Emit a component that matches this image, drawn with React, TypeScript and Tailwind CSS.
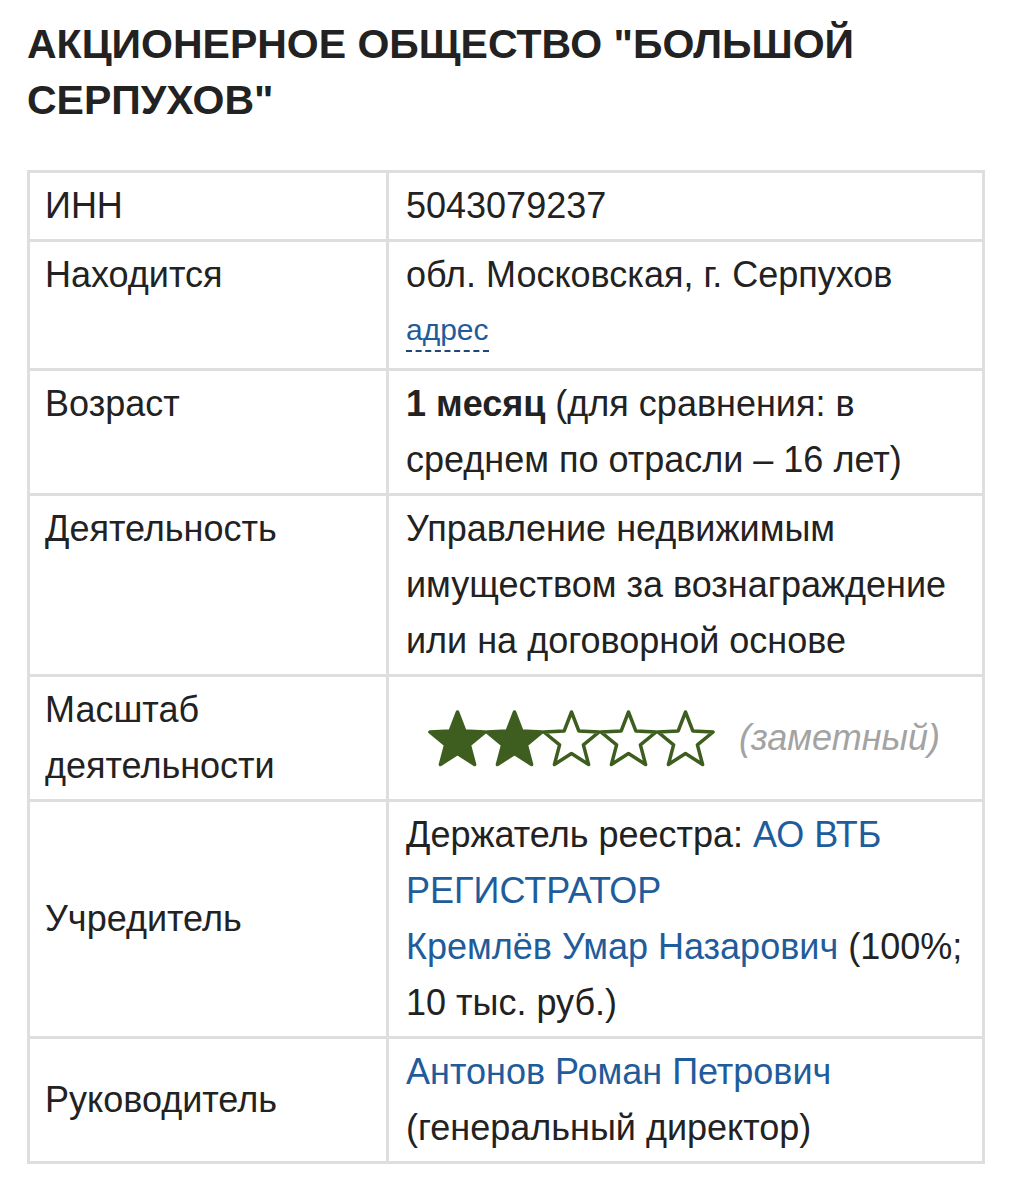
import type { ReactNode } from "react";

const STAR =
  "M28.5 2 L35.8 20.9 L56.1 22 L40.4 34.9 L45.6 54.5 L28.5 43.5 L11.4 54.5 L16.6 34.9 L0.9 22 L21.2 20.9 Z";

function Stars({ filled }: { filled: number }) {
  return (
    <svg width="285" height="57" viewBox="0 0 285 57" className="block overflow-visible">
      {[0, 1, 2, 3, 4].map((i) => (
        <path
          key={i}
          d={STAR}
          transform={`translate(${i * 57} 0)`}
          fill={i < filled ? "#3e5e1f" : "#ffffff"}
          stroke="#3e5e1f"
          strokeWidth="3.5"
          strokeLinejoin="round"
        />
      ))}
    </svg>
  );
}

function Link({ children }: { children: ReactNode }) {
  return <span className="text-[#1f5c9b]">{children}</span>;
}

function Row({
  label,
  children,
  middle,
}: {
  label: ReactNode;
  children: ReactNode;
  middle?: boolean;
}) {
  return (
    <tr>
      <td
        className={`w-[359px] border-[3px] border-[#dedede] py-[5px] pl-[15px] pr-3 ${
          middle ? "align-middle" : "align-top"
        }`}
      >
        {label}
      </td>
      <td className="border-[3px] border-[#dedede] py-[5px] pl-[17px] pr-3 align-top">
        {children}
      </td>
    </tr>
  );
}

export default function App() {
  return (
    <div className="min-h-[1200px] bg-white font-['Liberation_Sans',Arial,sans-serif] text-[#222]">
      <div className="px-[27px] pt-[16px]">
        <h1 className="mb-[42px] text-[41px] font-bold leading-[56px] text-[#222]">
          АКЦИОНЕРНОЕ ОБЩЕСТВО "БОЛЬШОЙ СЕРПУХОВ"
        </h1>
        <table className="w-[958px] border-collapse text-[36px] leading-[56px]">
          <tbody>
            <Row label="ИНН">5043079237</Row>
            <Row label="Находится">
              <div>обл. Московская, г. Серпухов</div>
              <div className="pb-[8px] leading-[50px]">
                <span className="border-b-2 border-dashed border-[#1e4676] pb-[4px] text-[30px] text-[#1f5c9b]">
                  адрес
                </span>
              </div>
            </Row>
            <Row label="Возраст">
              <b>1 месяц</b> (для сравнения: в среднем по отрасли – 16 лет)
            </Row>
            <Row label="Деятельность">
              Управление недвижимым имуществом за вознаграждение или на
              договорной основе
            </Row>
            <Row label={<>Масштаб<br />деятельности</>}>
              <div className="flex h-[112px] items-center pl-[23px]">
                <Stars filled={2} />
                <span className="ml-[25px] italic text-[#a3a3a3]">
                  (заметный)
                </span>
              </div>
            </Row>
            <Row label="Учредитель" middle>
              Держатель реестра: <Link>АО ВТБ РЕГИСТРАТОР</Link>
              <br />
              <Link>Кремлёв Умар Назарович</Link> (100%; 10 тыс. руб.)
            </Row>
            <Row label="Руководитель" middle>
              <Link>Антонов Роман Петрович</Link>
              <br />
              (генеральный директор)
            </Row>
          </tbody>
        </table>
      </div>
    </div>
  );
}
